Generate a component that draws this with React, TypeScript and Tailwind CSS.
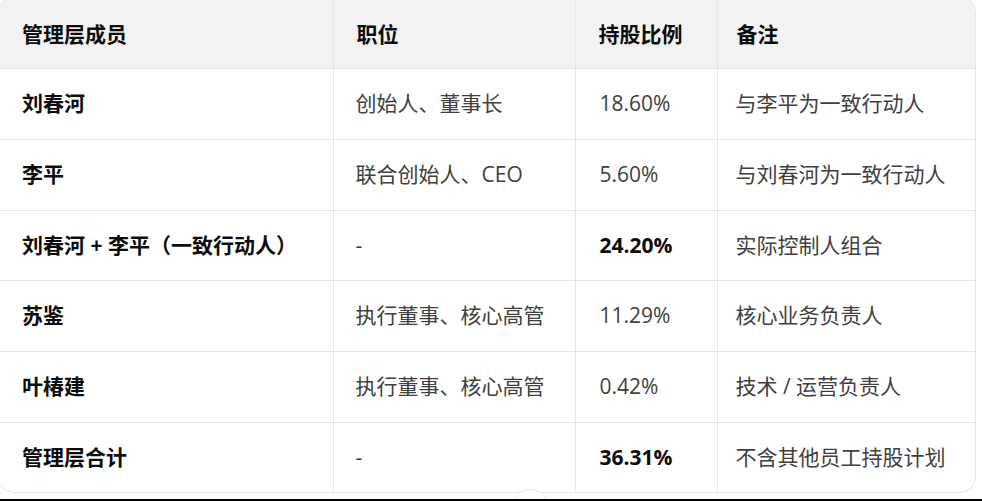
import React from "react"

type Row = {
  name: string
  role: string
  share: string
  note: string
  strong?: boolean
  h: string
}

const rows: Row[] = [
  { name: "刘春河", role: "创始人、董事长", share: "18.60%", note: "与李平为一致行动人", h: "h-[71px]" },
  { name: "李平", role: "联合创始人、CEO", share: "5.60%", note: "与刘春河为一致行动人", h: "h-[71px]" },
  { name: "刘春河 + 李平（一致行动人）", role: "-", share: "24.20%", note: "实际控制人组合", strong: true, h: "h-[70px]" },
  { name: "苏鉴", role: "执行董事、核心高管", share: "11.29%", note: "核心业务负责人", h: "h-[71px]" },
  { name: "叶椿建", role: "执行董事、核心高管", share: "0.42%", note: "技术 / 运营负责人", h: "h-[71px]" },
  { name: "管理层合计", role: "-", share: "36.31%", note: "不含其他员工持股计划", strong: true, h: "h-[70px]" },
]

export default function App() {
  return (
    <div
      className="relative flex h-[501px] w-[982px] flex-col overflow-hidden bg-white text-[21px] leading-[31px]"
      style={{ fontFamily: '"Open Sans", "Noto Sans CJK SC", sans-serif' }}
    >
      {/* Table card */}
      <div className="-mt-[4px] -ml-[2px] w-[978px] overflow-hidden rounded-2xl border border-[#e6e6e6]">
        <table className="w-full table-fixed border-collapse">
          <colgroup>
            <col className="w-[334px]" />
            <col className="w-[242px]" />
            <col className="w-[142px]" />
            <col />
          </colgroup>
          <thead>
            <tr className="h-[71px] bg-[#f2f2f2] text-left font-bold text-[#0d0d0d]">
              <th className="pl-[23px] pt-[4px] font-bold">管理层成员</th>
              <th className="border-l border-[#e6e6e6] pl-[23px] pt-[4px] font-bold">职位</th>
              <th className="border-l border-[#e6e6e6] pl-[23px] pt-[4px] font-bold">持股比例</th>
              <th className="border-l border-[#e6e6e6] pl-[19px] pt-[4px] font-bold">备注</th>
            </tr>
          </thead>
          <tbody>
            {rows.map((r) => (
              <tr key={r.name} className={`${r.h} border-t border-[#e6e6e6]`}>
                <td className="pl-[23px] font-bold text-[#0d0d0d]">{r.name}</td>
                <td className="border-l border-[#e6e6e6] pl-[22px] text-[#404040]">{r.role}</td>
                <td
                  className={`border-l border-[#e6e6e6] pl-[24px] ${
                    r.strong ? "font-bold text-[#0d0d0d]" : "text-[#404040]"
                  }`}
                >
                  {r.share}
                </td>
                <td className="border-l border-[#e6e6e6] pl-[18px] text-[#404040]">{r.note}</td>
              </tr>
            ))}
          </tbody>
        </table>
      </div>

      <div className="flex-1" />

      {/* Scroll button peeking from below */}
      <div className="absolute left-[512px] top-[489px] h-[36px] w-[36px] rounded-full border border-[#e6e6e6] bg-white" />

      <div className="relative z-10 h-[2px] w-full bg-black" />
    </div>
  )
}
